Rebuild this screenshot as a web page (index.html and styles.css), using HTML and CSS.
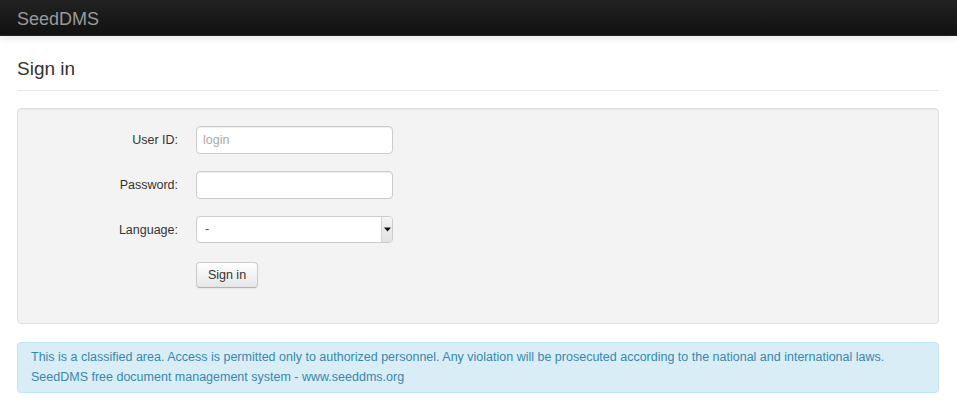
FILE: index.html
```html
<!DOCTYPE html>
<html>
<head>
<meta charset="utf-8">
<title>SeedDMS</title>
<link rel="stylesheet" href="styles.css">
</head>
<body>
<div class="navbar">
  <a class="brand" href="#">SeedDMS</a>
</div>
<div class="container">
  <div class="page-header"><h3>Sign in</h3></div>
  <div class="well">
    <form class="form-horizontal">
      <div class="control-group">
        <label class="control-label">User ID:</label>
        <div class="controls"><input type="text" class="input" placeholder="login"></div>
      </div>
      <div class="control-group">
        <label class="control-label">Password:</label>
        <div class="controls"><input type="password" class="input"></div>
      </div>
      <div class="control-group">
        <label class="control-label">Language:</label>
        <div class="controls">
          <div class="select">
            <span class="select-value">-</span>
            <span class="select-arrow"><svg width="7" height="5" viewBox="0 0 7 5"><path d="M0 0.5H7L3.5 4.5Z" fill="#111"/></svg></span>
          </div>
        </div>
      </div>
      <div class="control-group">
        <div class="controls"><button type="button" class="btn">Sign in</button></div>
      </div>
    </form>
  </div>
  <div class="alert">
    This is a classified area. Access is permitted only to authorized personnel. Any violation will be prosecuted according to the national and international laws.<br>
    SeedDMS free document management system - www.seeddms.org
  </div>
</div>
</body>
</html>
```

FILE: styles.css
```css
* { box-sizing: border-box; }
html, body { margin: 0; padding: 0; }
body {
  font-family: "Liberation Sans", Arial, sans-serif;
  font-size: 12.5px;
  line-height: 20px;
  color: #333;
  background: #fff;
}
.navbar {
  height: 36px;
  background: linear-gradient(to bottom, #222 0%, #111 100%);
  box-shadow: 0 1px 10px rgba(0,0,0,0.12);
  border-bottom: 1px solid #252525;
  display: flex;
  align-items: center;
  padding-left: 17px;
}
.brand {
  color: #999;
  font-size: 18px;
  text-decoration: none;
  line-height: 20px;
  padding-top: 2px;
}
.container {
  padding: 0 18px 0 17px;
}
.page-header {
  margin-top: 20px;
  border-bottom: 1px solid #e5e5e5;
  padding-bottom: 8px;
  margin-bottom: 17px;
}
.page-header h3 {
  margin: 0;
  font-size: 19px;
  font-weight: normal;
  line-height: 26px;
  color: #333;
}
.well {
  background: #f3f3f3;
  border: 1px solid #e0e0e0;
  border-radius: 4px;
  box-shadow: inset 0 1px 1px rgba(0,0,0,0.05);
  padding: 17px 19px 12px;
  height: 216px;
}
.control-group {
  display: flex;
  align-items: center;
  margin-bottom: 17px;
}
.control-label {
  width: 159px;
  text-align: right;
  padding-right: 18px;
  flex: none;
}
.controls {
  margin-left: 0;
}
.control-group:last-child .controls { margin-left: 159px; padding-top: 2px; }
.input {
  width: 197px;
  height: 28px;
  border: 1px solid #ccc;
  border-radius: 4px;
  background: #fff;
  box-shadow: inset 0 1px 1px rgba(0,0,0,0.075);
  padding: 4px 6px;
  font-family: inherit;
  font-size: 12.5px;
  color: #555;
}
.input::placeholder { color: #aaa; }
.select {
  width: 197px;
  height: 27px;
  border: 1px solid #ccc;
  border-radius: 4px;
  background: #fff;
  display: flex;
  align-items: stretch;
  overflow: hidden;
}
.select-value {
  flex: 1;
  padding-left: 8px;
  line-height: 25px;
  color: #555;
}
.select-arrow {
  width: 11px;
  background: linear-gradient(to bottom, #f4f4f4, #e2e2e2);
  border-left: 1px solid #d3d3d3;
  display: flex;
  align-items: center;
  justify-content: center;
}
.btn {
  font-family: inherit;
  font-size: 12.5px;
  color: #333;
  height: 26px;
  width: 62px;
  padding: 0;
  background: linear-gradient(to bottom, #fff, #e6e6e6);
  border: 1px solid #ccc;
  border-bottom-color: #b3b3b3;
  border-radius: 4px;
  box-shadow: inset 0 1px 0 rgba(255,255,255,.2), 0 1px 2px rgba(0,0,0,.05);
}
.alert {
  margin-top: 18px;
  background: #d9edf7;
  border: 1px solid #bce8f1;
  border-radius: 4px;
  color: #3a87ad;
  padding: 4px 14px 5px 13px;
  line-height: 20px;
}
```
